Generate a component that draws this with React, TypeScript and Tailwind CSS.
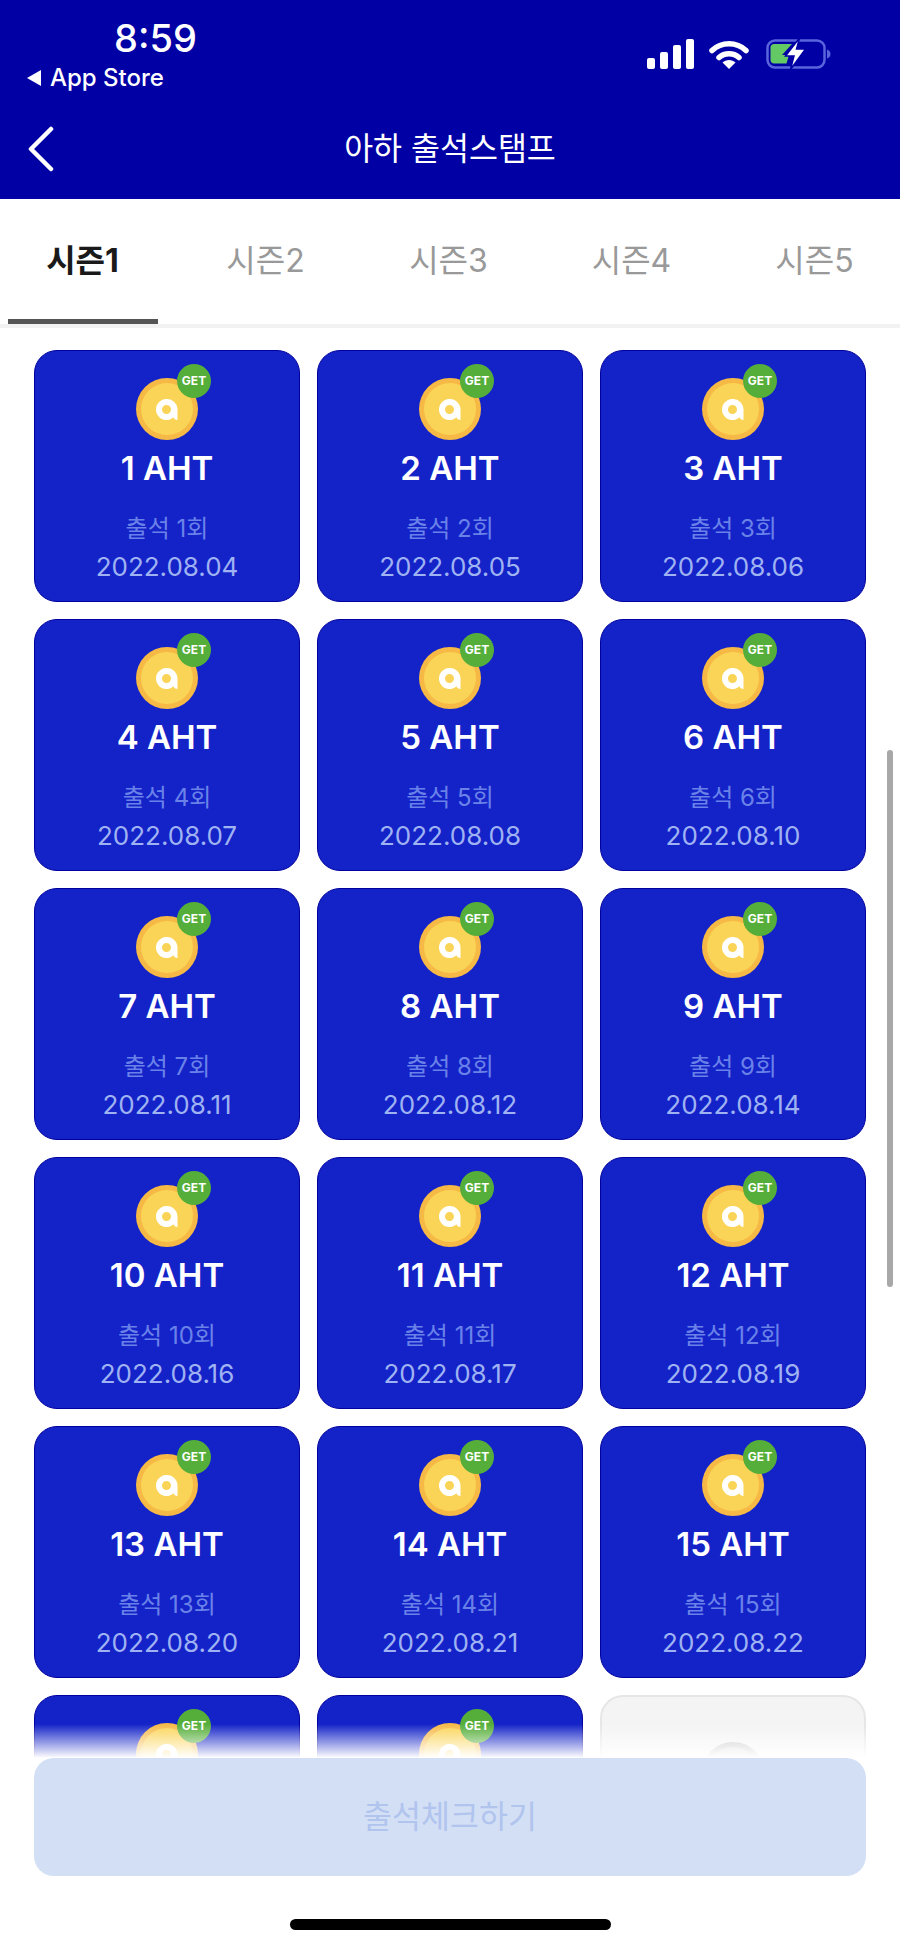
const stamps = [
  { n: 1, date: '2022.08.04' },
  { n: 2, date: '2022.08.05' },
  { n: 3, date: '2022.08.06' },
  { n: 4, date: '2022.08.07' },
  { n: 5, date: '2022.08.08' },
  { n: 6, date: '2022.08.10' },
  { n: 7, date: '2022.08.11' },
  { n: 8, date: '2022.08.12' },
  { n: 9, date: '2022.08.14' },
  { n: 10, date: '2022.08.16' },
  { n: 11, date: '2022.08.17' },
  { n: 12, date: '2022.08.19' },
  { n: 13, date: '2022.08.20' },
  { n: 14, date: '2022.08.21' },
  { n: 15, date: '2022.08.22' },
];

const seasons = ['시즌1', '시즌2', '시즌3', '시즌4', '시즌5'];

function StatusIcons() {
  return (
    <div className="flex items-center gap-[15px]">
      {/* Signal */}
      <div className="flex items-end gap-[5px] h-[30px]">
        <div className="w-[8px] h-[11px] rounded-[2px] bg-white" />
        <div className="w-[8px] h-[17px] rounded-[2px] bg-white" />
        <div className="w-[8px] h-[24px] rounded-[2px] bg-white" />
        <div className="w-[8px] h-[30px] rounded-[2px] bg-white" />
      </div>
      {/* Wifi */}
      <svg width="40" height="30" viewBox="0 0 40 30" fill="none">
        <path d="M3 11.5C12.5 2.5 27.5 2.5 37 11.5" stroke="white" strokeWidth="5.5" strokeLinecap="round" />
        <path d="M10 18.5C15.5 13.5 24.5 13.5 30 18.5" stroke="white" strokeWidth="5.5" strokeLinecap="round" />
        <path d="M13.5 23.5C17 20 23 20 26.5 23.5L20 30Z" fill="white" />
      </svg>
      {/* Battery */}
      <svg width="66" height="32" viewBox="0 0 66 32" fill="none" className="ml-[2px]">
        <rect x="1.5" y="2.5" width="57" height="27" rx="7.5" stroke="#5a64dc" strokeWidth="2.5" />
        <path d="M61 11.5C63.5 12.5 64.5 14 64.5 16C64.5 18 63.5 19.5 61 20.5Z" fill="#5a64dc" />
        <path d="M8 6H26L16 17H23L20.5 25.5H8C6 25.5 4.5 24 4.5 22V9.5C4.5 7.5 6 6 8 6Z" fill="#63c964" />
        <path d="M33.5 0L19.5 18H28L24.5 31.5L39.5 11H30.5Z" fill="white" stroke="#0000a5" strokeWidth="1.5" />
      </svg>
    </div>
  );
}

function Coin({ gray }: { gray?: boolean }) {
  return (
    <div className={`flex w-[62px] h-[62px] items-center justify-center rounded-full ${gray ? 'bg-[#c8c8c8]' : 'bg-[#f6b945]'}`}>
      <div className={`flex w-[52px] h-[52px] items-center justify-center rounded-full ${gray ? 'bg-[#dcdcdc]' : 'bg-[#fad457]'}`}>
        <svg width="22" height="21" viewBox="0 0 22 21">
          <path
            fillRule="evenodd"
            fill="white"
            d="M10.5 0A10.5 10.5 0 1 0 17.5 18.3C18 20 19.5 21 21.5 21V10.5A10.5 10.5 0 0 0 10.5 0ZM10.5 6A4.5 4.5 0 1 0 10.5 15A4.5 4.5 0 1 0 10.5 6Z"
          />
        </svg>
      </div>
    </div>
  );
}

function StampCard({ n, date }: { n?: number; date?: string }) {
  return (
    <div className="flex flex-col items-center h-[252px] rounded-[23px] border-[1.5px] border-[#00009c] bg-[#1423c8] pt-[27px]">
      <div className="relative">
        <Coin />
        <div className="absolute top-[-14px] right-[-13px] flex w-[34px] h-[34px] items-center justify-center rounded-full bg-[#55ae39] text-[12px] font-bold text-white">
          GET
        </div>
      </div>
      {/* last row is cut off by the bottom bar, so it has no text */}
      {n && (
        <>
          <div className="mt-[8px] text-[33px] leading-[40px] font-semibold text-white">{n} AHT</div>
          <div className="mt-[25px] text-[24px] leading-[32px] text-[#6a82e8]">출석 {n}회</div>
          <div className="mt-[5px] text-[26px] leading-[34px] text-[#9fb2f2]">{date}</div>
        </>
      )}
    </div>
  );
}

export default function App() {
  return (
    <div className="relative flex flex-col h-[1947px] w-[900px] overflow-hidden bg-white font-['Inter','Noto_Sans_CJK_KR',sans-serif]">
      {/* Header */}
      <div className="h-[199px] shrink-0 bg-[#0000a5] text-white">
        <div className="flex justify-between h-[99px] pt-[16px] pl-[27px] pr-[68px]">
          <div className="flex flex-col">
            <div className="ml-[87px] text-[38px] leading-[44px] font-medium">8:59</div>
            <div className="mt-[3px] flex items-center gap-[9px] text-[24px] leading-[30px] font-medium">
              <div className="w-0 h-0 border-y-[8px] border-y-transparent border-r-[14px] border-r-white" />
              App Store
            </div>
          </div>
          <div className="pt-[22px]">
            <StatusIcons />
          </div>
        </div>
        <div className="relative flex items-center justify-center h-[100px]">
          <svg width="28" height="46" viewBox="0 0 28 46" fill="none" className="absolute left-[27px] top-[27px]">
            <path d="M24 3L4 23L24 43" stroke="white" strokeWidth="4.5" strokeLinecap="round" strokeLinejoin="round" />
          </svg>
          <div className="text-[31.5px] leading-[40px]">아하 출석스탬프</div>
        </div>
      </div>

      {/* Season tabs */}
      <div className="flex shrink-0 h-[129px] ml-[-9px] border-b-[4px] border-[#f2f2f2]">
        {seasons.map((s, i) => (
          <div key={s} className="flex w-[183px] shrink-0 flex-col items-center">
            <div className={`mt-[41px] flex-1 text-[32px] leading-[42px] ${i === 0 ? 'font-bold text-[#1a1a1a]' : 'text-[#999999]'}`}>
              {s}
            </div>
            {i === 0 && <div className="w-[150px] h-[5px] bg-[#555555]" />}
          </div>
        ))}
      </div>

      {/* Stamp grid */}
      <div className="grid grid-cols-3 gap-x-[17px] gap-y-[17px] px-[34px] pt-[22px]">
        {stamps.map((s) => (
          <StampCard key={s.n} n={s.n} date={s.date} />
        ))}
        <StampCard />
        <StampCard />
        <div className="flex flex-col items-center h-[252px] rounded-[23px] border-[2px] border-[#e6e6e6] bg-[#f4f4f4] pt-[45px]">
          <Coin gray />
        </div>
      </div>

      {/* Scroll indicator */}
      <div className="absolute left-[887px] top-[750px] w-[6px] h-[537px] rounded-full bg-[#a8a8a8]" />

      {/* Bottom action */}
      <div className="absolute inset-x-0 bottom-0 flex flex-col">
        <div className="h-[34px] bg-gradient-to-b from-white/0 to-white" />
        <div className="flex flex-col items-center h-[189px] bg-white px-[34px]">
          <div className="flex w-full h-[118px] items-center justify-center rounded-[20px] bg-[#d3dff5] text-[31.5px] text-[#b0c4ee]">
            출석체크하기
          </div>
          <div className="mt-[43px] w-[321px] h-[11px] rounded-full bg-black" />
        </div>
      </div>
    </div>
  );
}
